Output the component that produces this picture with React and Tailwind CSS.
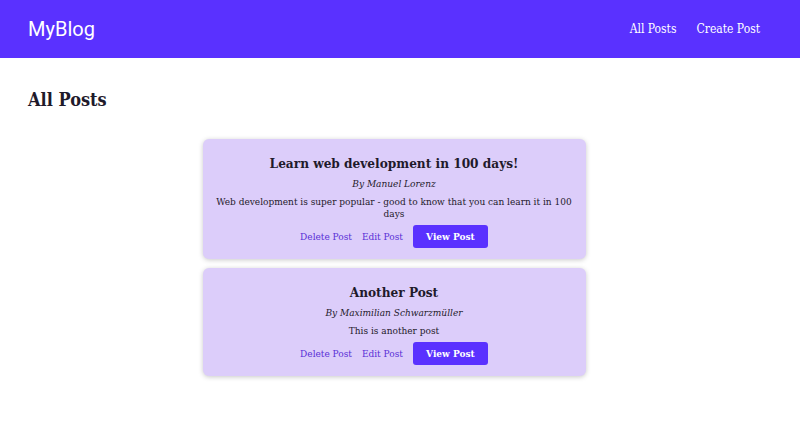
export default function App() {
  const posts = [
    {
      title: "Learn web development in 100 days!",
      author: "Manuel Lorenz",
      text: "Web development is super popular - good to know that you can learn it in 100 days",
    },
    {
      title: "Another Post",
      author: "Maximilian Schwarzmüller",
      text: "This is another post",
    },
  ];
  const serif = { fontFamily: '"DejaVu Serif Condensed", "DejaVu Serif", serif', fontStretch: "semi-condensed" };
  return (
    <div className="min-h-[438px] bg-white text-[#1f1a2b]" style={serif}>
      <header className="h-[58px] bg-[#5a31ff] flex items-center justify-between pl-7 pr-10">
        <div className="text-white text-[20px]" style={{ fontFamily: "Roboto, sans-serif", fontStretch: "normal" }}>
          MyBlog
        </div>
        <nav className="flex gap-5 text-white text-[12px]">
          <span>All Posts</span>
          <span>Create Post</span>
        </nav>
      </header>
      <main className="px-7 pt-[30px]">
        <h1 className="text-[18px] font-bold leading-6">All Posts</h1>
        <ul className="mt-[27px] flex flex-col items-center gap-[9px] pr-[12px]">
          {posts.map((p) => (
            <li
              key={p.title}
              className="w-[383px] bg-[#dccdfa] rounded-md shadow-[0_1px_5px_rgba(0,0,0,0.22)] px-2 pt-[12px] pb-[11px] text-center"
            >
              <h2 className="text-[13.5px] font-bold leading-6">{p.title}</h2>
              <p className="italic text-[10px] leading-4 mt-[1px]">By {p.author}</p>
              <p className="text-[10px] leading-[12px] mt-[4px]">{p.text}</p>
              <div className="flex justify-center items-center gap-[10px] mt-[5px] text-[10px]">
                <span className="text-[#5a2fd6]">Delete Post</span>
                <span className="text-[#5a2fd6]">Edit Post</span>
                <span className="bg-[#5a31ff] text-white rounded-[3px] w-[75px] h-[23px] flex items-center justify-center font-bold">
                  View Post
                </span>
              </div>
            </li>
          ))}
        </ul>
      </main>
    </div>
  );
}
